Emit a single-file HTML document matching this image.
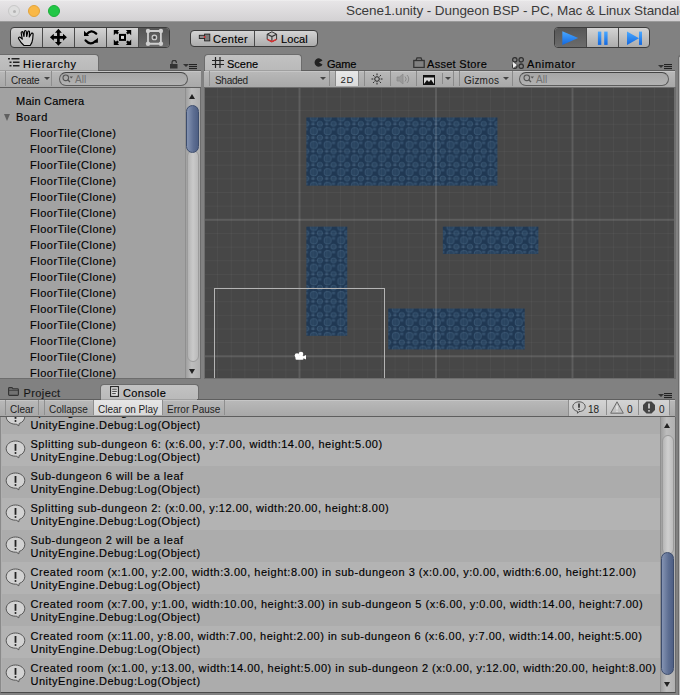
<!DOCTYPE html>
<html><head><meta charset="utf-8">
<style>
*{margin:0;padding:0;box-sizing:border-box}
html,body{width:680px;height:695px;overflow:hidden;background:#818181;font-family:"Liberation Sans",sans-serif;color:#1a1a1a}
.a{position:absolute}
#title{left:0;top:0;width:680px;height:22px;background:linear-gradient(#f4f4f4 0,#e7e5e7 1px,#d3d1d3);border-bottom:1px solid #9a9a9a}
.tl{position:absolute;top:5px;width:12px;height:12px;border-radius:50%}
#ttext{left:346px;top:3px;font-size:13.5px;letter-spacing:-0.08px;color:#3a3a3a;white-space:pre}
.grp{position:absolute;border:1px solid #3c3c3c;border-radius:4px;overflow:hidden;background:linear-gradient(#d4d4d4,#acacac)}
.grp>div{position:absolute;top:0;height:100%;border-right:1px solid #4a4a4a}
.tab{position:absolute;border:1px solid #6c6c6c;border-bottom:none;border-radius:4px 4px 0 0;background:linear-gradient(#c2c2c2,#b9b9b9)}
.tt{position:absolute;font-size:11px;white-space:pre;color:#000;line-height:13px;-webkit-text-stroke:0.15px #000}
.ptb{position:absolute;height:18px;background:linear-gradient(#c6c6c6 0,#c6c6c6 1px,#b8b8b8 1px,#a8a8a8);border-top:1px solid #5e5e5e;border-bottom:1px solid #5e5e5e}
.btxt{position:absolute;font-size:10px;white-space:pre;color:#222;line-height:12px}
.vs{position:absolute;width:1px;background:#8a8a8a}
.srch{position:absolute;height:14px;border:1px solid #5c5c5c;border-top-color:#444;border-radius:7px;background:linear-gradient(#a6a6a6,#b2b2b2)}
.row{position:absolute;left:1px;width:659px;height:32px;background:#b3b3b3}
.row.d{background:#acacac}
.row .l1,.row .l2{position:absolute;left:28.5px;font-size:11px;letter-spacing:0.51px;white-space:pre;color:#000;line-height:13px;-webkit-text-stroke:0.15px #000}
.row .l1{top:4px}
.row .l2{top:17px}
.row svg{position:absolute;left:3px;top:6px}
.hi{position:absolute;left:30px;font-size:11px;letter-spacing:0.5px;white-space:pre;color:#000;line-height:16px;-webkit-text-stroke:0.15px #000}
.dd{position:absolute;width:0;height:0;border-left:3px solid transparent;border-right:3px solid transparent;border-top:3px solid #333}
</style></head><body>

<!-- TITLE BAR -->
<div id="title" class="a">
  <div class="tl" style="left:8px;background:#dedede;border:1px solid #c8c8c8"><div style="position:absolute;left:3.5px;top:3.5px;width:3px;height:3px;border-radius:50%;background:#b4b4b4"></div></div>
  <div class="tl" style="left:28px;background:#f9b847;border:1px solid #e3a33a"></div>
  <div class="tl" style="left:48px;background:#22c746;border:1px solid #1aae38"></div>
  <div id="ttext" class="a">Scene1.unity - Dungeon BSP - PC, Mac &amp; Linux Standalone</div>
</div>

<!-- MAIN TOOLBAR -->
<div class="grp" style="left:10px;top:27px;width:160px;height:21px">
  <div style="left:0;width:32px"></div>
  <div style="left:32px;width:32px"></div>
  <div style="left:64px;width:32px"></div>
  <div style="left:96px;width:32px"></div>
  <div style="left:128px;width:31px;border:none;background:linear-gradient(#555,#6a6a6a)"></div>
</div>
<div class="grp" style="left:190px;top:30px;width:128px;height:17px">
  <div style="left:0;width:64px"></div>
  <div class="tt" style="left:22px;top:1.5px;border:none;letter-spacing:0.33px">Center</div>
  <div class="tt" style="left:90px;top:1.5px;border:none;letter-spacing:0.1px">Local</div>
</div>
<div class="grp" style="left:554px;top:27px;width:96px;height:21px">
  <div style="left:0;width:32px;background:linear-gradient(#575757,#6c6c6c)"></div>
  <div style="left:32px;width:32px"></div>
  <div style="left:64px;width:31px;border:none"></div>
</div>
<svg class="a" style="left:0;top:22px" width="680" height="33" viewBox="0 22 680 33">
<defs><linearGradient id="bl" x1="0" y1="0" x2="0" y2="1"><stop offset="0" stop-color="#4aa8ff"/><stop offset="1" stop-color="#1268e0"/></linearGradient></defs>
<path d="M24 45.5 C21.5 43.5 19.5 40.5 18.6 38.8 C18 37.6 19.2 36.6 20.3 37.3 L22.3 39.2 L21.2 33 C21 31.6 22.6 31.2 23 32.5 L24 36.5 L24.4 31.5 C24.5 30.2 26.2 30.2 26.3 31.5 L26.7 36.5 L27.8 31.8 C28.1 30.6 29.6 30.8 29.5 32.1 L29.3 37 L31.1 33.7 C31.6 32.7 33.2 33.1 33.1 34.2 L32.7 39 C32.4 41.8 31.4 44 30.2 45.5 Z" fill="#cfcfcf" stroke="#000" stroke-width="1.15" stroke-linejoin="round"/>
<path d="M58.40 28.80 L61.85 32.70 L59.75 32.70 L59.75 35.95 L63.00 35.95 L63.00 33.85 L66.90 37.30 L63.00 40.75 L63.00 38.65 L59.75 38.65 L59.75 41.90 L61.85 41.90 L58.40 45.80 L54.95 41.90 L57.05 41.90 L57.05 38.65 L53.80 38.65 L53.80 40.75 L49.90 37.30 L53.80 33.85 L53.80 35.95 L57.05 35.95 L57.05 32.70 L54.95 32.70Z" fill="#000"/>
<path d="M86.6 34.2 Q91.2 28.8 96.2 33.6" fill="none" stroke="#000" stroke-width="2.3" stroke-linecap="round"/>
<path d="M84 30.8 L84 35.9 L89.1 35.9Z" fill="#000"/>
<path d="M85.6 40.4 Q90.6 46 95.6 41" fill="none" stroke="#000" stroke-width="2.3" stroke-linecap="round"/>
<path d="M97.9 37.7 L97.9 42.8 L92.8 42.8Z" fill="#000"/>
<rect x="120" y="34.9" width="5" height="5" fill="#d8d8d8" stroke="#000" stroke-width="2"/>
<path d="M113.8 29.9 L119.2 29.9 L117.6 31.5 L118.9 32.8 L117.2 34.5 L115.9 33.2 L113.8 35.3Z M131.2 29.9 L125.8 29.9 L127.4 31.5 L126.1 32.8 L127.8 34.5 L129.1 33.2 L131.2 35.3Z M113.8 45 L119.2 45 L117.6 43.4 L118.9 42.1 L117.2 40.4 L115.9 41.7 L113.8 39.6Z M131.2 45 L125.8 45 L127.4 43.4 L126.1 42.1 L127.8 40.4 L129.1 41.7 L131.2 39.6Z" fill="#000"/>
<path d="M148 31 H160.9 V43.75 H148Z" fill="none" stroke="#cfcfcf" stroke-width="1.8"/>
<circle cx="148" cy="31" r="2.2" fill="#cfcfcf"/><circle cx="160.9" cy="31" r="2.2" fill="#cfcfcf"/><circle cx="148" cy="43.75" r="2.2" fill="#cfcfcf"/><circle cx="160.9" cy="43.75" r="2.2" fill="#cfcfcf"/>
<circle cx="154.4" cy="37.4" r="2.3" fill="none" stroke="#cfcfcf" stroke-width="1.1"/><circle cx="154.4" cy="37.4" r="0.7" fill="#333"/>
<rect x="199.3" y="35.3" width="5.2" height="3.2" fill="#8a8a8a" stroke="#222" stroke-width="0.9"/>
<rect x="204.6" y="34.1" width="5.2" height="6.8" fill="#7a7a7a" stroke="#222" stroke-width="0.9"/>
<circle cx="204.6" cy="37" r="1" fill="#e03030"/>
<path d="M271.9 31.8 L276.6 34.2 L276.6 39.4 L271.9 41.8 L267.2 39.4 L267.2 34.2Z" fill="#c4c4c4" stroke="#333" stroke-width="1"/>
<path d="M267.2 34.2 L271.9 36.6 L276.6 34.2 M271.9 36.6 L271.9 41.8" fill="none" stroke="#333" stroke-width="1.1"/>
<path d="M267.4 39.4 L271.9 41.7 L276.4 39.4" fill="none" stroke="#d83030" stroke-width="1.5"/>
<path d="M562.3 31.2 L578.2 38 L562.3 44.9Z" fill="url(#bl)"/>
<rect x="597.9" y="31.6" width="3.4" height="13.3" fill="url(#bl)"/><rect x="604.2" y="31.6" width="3.4" height="13.3" fill="url(#bl)"/>
<path d="M627 31.6 L639 38.2 L627 44.9Z" fill="url(#bl)"/><rect x="639" y="31.6" width="3" height="13.3" fill="url(#bl)"/>
</svg>

<!-- HIERARCHY PANEL -->
<div class="tab" style="left:-4px;top:54px;width:103px;height:17px"></div>
<svg class="a" style="left:8px;top:58px" width="12" height="9" viewBox="0 0 12 9"><rect x="0" y="0" width="2" height="1.5" fill="#222"/><rect x="3.5" y="0" width="8" height="1.5" fill="#222"/><rect x="1.5" y="3.5" width="2" height="1.5" fill="#222"/><rect x="5" y="3.5" width="6.5" height="1.5" fill="#222"/><rect x="1.5" y="7" width="2" height="1.5" fill="#222"/><rect x="5" y="7" width="6.5" height="1.5" fill="#222"/></svg>
<div class="tt" style="left:23px;top:58px;letter-spacing:0.75px">Hierarchy</div>
<svg class="a" style="left:170px;top:60px" width="8" height="9" viewBox="0 0 8 9"><path d="M2 4 L2 2.5 A2.2 2.2 0 0 1 6.4 2.5 L6.4 3" fill="none" stroke="#333" stroke-width="1.2"/><rect x="0" y="4" width="7.5" height="4.5" fill="#333"/></svg>
<div class="dd" style="left:183px;top:64px"></div>
<svg class="a" style="left:189px;top:64px" width="9" height="6" viewBox="0 0 9 6"><rect y="0" width="8" height="1.1" fill="#222"/><rect y="2" width="8" height="1.1" fill="#222"/><rect y="4" width="8" height="1.1" fill="#222"/></svg>
<div class="ptb" style="left:0;top:70px;width:201px"></div><div class="a" style="left:0;top:70px;width:98px;height:1px;background:#a0a0a0"></div>
<div class="vs" style="left:5px;top:71px;height:15px;background:#8e8e8e"></div>
<div class="btxt" style="left:11px;top:74.5px;letter-spacing:-0.3px">Create</div>
<div class="dd" style="left:44px;top:77px;border-top-color:#444"></div>
<div class="vs" style="left:51px;top:71px;height:15px;background:#8e8e8e"></div>
<div class="srch" style="left:59px;top:72px;width:129px"></div>
<svg class="a" style="left:62px;top:74px" width="12" height="10" viewBox="0 0 12 10"><circle cx="3.8" cy="3.8" r="2.8" fill="none" stroke="#555" stroke-width="1.1"/><path d="M5.8 5.8 L8 8" stroke="#555" stroke-width="1.3"/><path d="M7.5 2.5 L11 2.5 L9.25 4.5Z" fill="#555"/></svg>
<div class="btxt" style="left:75px;top:74px;color:#707070">All</div>
<div class="a" style="left:0;top:88px;width:201px;height:291px;background:#a2a2a2;border-right:1px solid #6d6d6d;border-bottom:1px solid #6d6d6d"></div>
<div class="hi" style="left:16px;top:93px;letter-spacing:0.22px">Main Camera</div>
<div class="a" style="left:4.3px;top:113.5px;width:0;height:0;border-left:3.9px solid transparent;border-right:3.9px solid transparent;border-top:7px solid #606060"></div>
<div class="hi" style="left:16px;top:109px">Board</div>
<div class="hi" style="top:125px">FloorTile(Clone)</div>
<div class="hi" style="top:141px">FloorTile(Clone)</div>
<div class="hi" style="top:157px">FloorTile(Clone)</div>
<div class="hi" style="top:173px">FloorTile(Clone)</div>
<div class="hi" style="top:189px">FloorTile(Clone)</div>
<div class="hi" style="top:205px">FloorTile(Clone)</div>
<div class="hi" style="top:221px">FloorTile(Clone)</div>
<div class="hi" style="top:237px">FloorTile(Clone)</div>
<div class="hi" style="top:253px">FloorTile(Clone)</div>
<div class="hi" style="top:269px">FloorTile(Clone)</div>
<div class="hi" style="top:285px">FloorTile(Clone)</div>
<div class="hi" style="top:301px">FloorTile(Clone)</div>
<div class="hi" style="top:317px">FloorTile(Clone)</div>
<div class="hi" style="top:333px">FloorTile(Clone)</div>
<div class="hi" style="top:349px">FloorTile(Clone)</div>
<div class="hi" style="top:365px">FloorTile(Clone)</div>
<!-- hierarchy scrollbar -->
<div class="a" style="left:185px;top:88px;width:15px;height:290px;background:linear-gradient(90deg,#a0a0a0,#bdbdbd 40%,#b0b0b0);border-left:1px solid #8f8f8f"></div>
<div class="a" style="left:189px;top:94px;width:0;height:0;border-left:3.5px solid transparent;border-right:3.5px solid transparent;border-bottom:5px solid #222"></div>
<div class="a" style="left:187px;top:150px;width:12px;height:212px;border-radius:6px;background:linear-gradient(90deg,#b4b4b4,#cacaca 50%,#bababa);border:1px solid #9c9c9c"></div>
<div class="a" style="left:186px;top:105px;width:13px;height:48px;border-radius:6.5px;background:linear-gradient(90deg,#8493b2,#5d6e92 60%,#4e5f84);border:1px solid #3d4d6d"></div>
<div class="a" style="left:189px;top:368.5px;width:0;height:0;border-left:3.5px solid transparent;border-right:3.5px solid transparent;border-top:5px solid #222"></div>

<!-- SCENE PANEL -->
<div class="tab" style="left:204px;top:54px;width:98px;height:17px"></div>
<svg class="a" style="left:212px;top:57px" width="12" height="11" viewBox="0 0 12 11"><path d="M3.5 0 V11 M8 0 V11 M0 3.5 H12 M0 7.5 H12" stroke="#222" stroke-width="1.2"/></svg>
<div class="tt" style="left:227px;top:58px">Scene</div>
<svg class="a" style="left:314px;top:58px" width="9" height="9" viewBox="0 0 9 9"><path d="M8.5 2.6 A4.2 4.2 0 1 0 8.5 6.4 L5 4.5 Z" fill="#222"/></svg>
<div class="tt" style="left:327px;top:58px;letter-spacing:-0.2px">Game</div>
<svg class="a" style="left:413px;top:57px" width="12" height="11" viewBox="0 0 12 11"><rect x="0.8" y="3.5" width="10.4" height="7" fill="none" stroke="#333" stroke-width="1.3"/><path d="M3 3.5 L4 0.8 L8 0.8 L9 3.5" fill="none" stroke="#333" stroke-width="1.2"/></svg>
<div class="tt" style="left:427px;top:58px;letter-spacing:0.29px">Asset Store</div>
<svg class="a" style="left:512px;top:57px" width="12" height="12" viewBox="0 0 12 12"><circle cx="2.8" cy="2.8" r="2.2" fill="none" stroke="#333" stroke-width="1.3"/><circle cx="9.2" cy="2.8" r="2.2" fill="none" stroke="#333" stroke-width="1.3"/><circle cx="2.8" cy="9.2" r="2.2" fill="none" stroke="#333" stroke-width="1.3"/><circle cx="9.2" cy="9.2" r="2.2" fill="none" stroke="#333" stroke-width="1.3"/><path d="M1 5 L5 8 L1 11Z" fill="#eee"/></svg>
<div class="tt" style="left:527px;top:58px;letter-spacing:0.6px">Animator</div>
<div class="dd" style="left:658px;top:65px"></div>
<svg class="a" style="left:664px;top:64px" width="9" height="6" viewBox="0 0 9 6"><rect y="0" width="8" height="1.1" fill="#222"/><rect y="2" width="8" height="1.1" fill="#222"/><rect y="4" width="8" height="1.1" fill="#222"/></svg>
<div class="ptb" style="left:204px;top:70px;width:471px"></div><div class="a" style="left:205px;top:70px;width:96px;height:1px;background:#a0a0a0"></div>
<div class="vs" style="left:209px;top:71px;height:15px;background:#8e8e8e"></div>
<div class="btxt" style="left:215px;top:74.5px;letter-spacing:-0.3px">Shaded</div>
<div class="dd" style="left:320px;top:77px;border-top-color:#444"></div>
<div class="vs" style="left:329px;top:71px;height:15px"></div>
<div class="a" style="left:335px;top:71px;width:23px;height:15px;background:linear-gradient(#e8e8e8,#dadada)"></div>
<div class="vs" style="left:335px;top:71px;height:15px"></div>
<div class="vs" style="left:358px;top:71px;height:15px"></div>
<div class="btxt" style="left:340.5px;top:73.5px;font-size:9.5px;letter-spacing:0.6px">2D</div>
<div class="vs" style="left:364px;top:71px;height:15px"></div>
<svg class="a" style="left:371px;top:73px" width="12" height="12" viewBox="0 0 12 12"><circle cx="6" cy="6" r="2.3" fill="none" stroke="#222" stroke-width="1"/><path d="M6 0.5V2.3M6 9.7V11.5M0.5 6H2.3M9.7 6H11.5M2.1 2.1L3.4 3.4M8.6 8.6L9.9 9.9M2.1 9.9L3.4 8.6M8.6 3.4L9.9 2.1" stroke="#222" stroke-width="1"/></svg>
<div class="vs" style="left:390px;top:71px;height:15px"></div>
<svg class="a" style="left:396px;top:73px" width="14" height="12" viewBox="0 0 14 12"><path d="M1 4 L3.5 4 L7 1 L7 11 L3.5 8 L1 8Z" fill="#9a9a9a" stroke="#8a8a8a" stroke-width="0.8"/><path d="M9 3.5 A3.5 3.5 0 0 1 9 8.5 M11 2 A5.5 5.5 0 0 1 11 10" fill="none" stroke="#8a8a8a" stroke-width="1"/></svg>
<div class="vs" style="left:416px;top:71px;height:15px"></div>
<svg class="a" style="left:423px;top:75px" width="12" height="10" viewBox="0 0 12 10"><rect x="0.5" y="0.5" width="11" height="9" fill="#d8d8d8" stroke="#111" stroke-width="1"/><path d="M1 9 L4 5 L6 7 L8 4.5 L11 9Z" fill="#111"/><rect x="0.5" y="0.5" width="11" height="2" fill="#111"/></svg>
<div class="vs" style="left:442px;top:73px;height:11px"></div>
<div class="dd" style="left:445px;top:77px;border-top-color:#444"></div>
<div class="vs" style="left:453px;top:71px;height:15px"></div>
<div class="vs" style="left:459px;top:71px;height:15px"></div>
<div class="btxt" style="left:464px;top:75px;letter-spacing:0.2px">Gizmos</div>
<div class="dd" style="left:503px;top:77px;border-top-color:#444"></div>
<div class="vs" style="left:512px;top:71px;height:15px"></div>
<div class="srch" style="left:519px;top:72px;width:150px"></div>
<svg class="a" style="left:523px;top:74px" width="12" height="10" viewBox="0 0 12 10"><circle cx="3.8" cy="3.8" r="2.8" fill="none" stroke="#555" stroke-width="1.1"/><path d="M5.8 5.8 L8 8" stroke="#555" stroke-width="1.3"/><path d="M7.5 2.5 L11 2.5 L9.25 4.5Z" fill="#555"/></svg>
<div class="btxt" style="left:536px;top:74px;color:#707070">All</div>
<div class="a" style="left:204px;top:87px;width:472px;height:292px;background:#6d6d6d"></div>
<svg class="a" style="left:205px;top:88px" width="469" height="290" viewBox="0 0 469 290">
<defs>
<pattern id="tp" patternUnits="userSpaceOnUse" x="101.32" y="261.48" width="13.65" height="13.65">
<rect width="13.65" height="13.65" fill="#203853"/>
<g fill="#34506d">
<rect x="5.2" y="5.2" width="3" height="2.6"/>
<rect x="12" y="10.5" width="1.6" height="2.6"/>
<rect x="0" y="10.5" width="1.4" height="2.6"/>
</g>
<g fill="#294460" stroke="#3a5773" stroke-width="0.9">
<rect x="4.2" y="-3.3" width="6.8" height="6.9" rx="2.4"/>
<rect x="4.2" y="10.35" width="6.8" height="6.9" rx="2.4"/>
<rect x="-2.6" y="4.2" width="5" height="4.6" rx="1.8"/>
<rect x="11.05" y="4.2" width="5" height="4.6" rx="1.8"/>
</g>
</pattern>
</defs>
<rect width="469" height="290" fill="#474747"/>
<rect x="101.32" y="138.62" width="40.95" height="109.20" fill="url(#tp)"/>
<rect x="183.23" y="220.53" width="136.50" height="40.95" fill="url(#tp)"/>
<rect x="237.83" y="138.62" width="95.55" height="27.30" fill="url(#tp)"/>
<rect x="101.32" y="29.43" width="191.10" height="68.25" fill="url(#tp)"/>
<rect x="12.10" y="0" width="1" height="290" fill="#fff" fill-opacity="0.04"/>
<rect x="25.75" y="0" width="1" height="290" fill="#fff" fill-opacity="0.04"/>
<rect x="39.40" y="0" width="1" height="290" fill="#fff" fill-opacity="0.04"/>
<rect x="53.05" y="0" width="1" height="290" fill="#fff" fill-opacity="0.04"/>
<rect x="66.70" y="0" width="1" height="290" fill="#fff" fill-opacity="0.04"/>
<rect x="80.35" y="0" width="1" height="290" fill="#fff" fill-opacity="0.04"/>
<rect x="107.65" y="0" width="1" height="290" fill="#fff" fill-opacity="0.04"/>
<rect x="121.30" y="0" width="1" height="290" fill="#fff" fill-opacity="0.04"/>
<rect x="134.95" y="0" width="1" height="290" fill="#fff" fill-opacity="0.04"/>
<rect x="148.60" y="0" width="1" height="290" fill="#fff" fill-opacity="0.04"/>
<rect x="162.25" y="0" width="1" height="290" fill="#fff" fill-opacity="0.04"/>
<rect x="175.90" y="0" width="1" height="290" fill="#fff" fill-opacity="0.04"/>
<rect x="189.55" y="0" width="1" height="290" fill="#fff" fill-opacity="0.04"/>
<rect x="203.20" y="0" width="1" height="290" fill="#fff" fill-opacity="0.04"/>
<rect x="216.85" y="0" width="1" height="290" fill="#fff" fill-opacity="0.04"/>
<rect x="244.15" y="0" width="1" height="290" fill="#fff" fill-opacity="0.04"/>
<rect x="257.80" y="0" width="1" height="290" fill="#fff" fill-opacity="0.04"/>
<rect x="271.45" y="0" width="1" height="290" fill="#fff" fill-opacity="0.04"/>
<rect x="285.10" y="0" width="1" height="290" fill="#fff" fill-opacity="0.04"/>
<rect x="298.75" y="0" width="1" height="290" fill="#fff" fill-opacity="0.04"/>
<rect x="312.40" y="0" width="1" height="290" fill="#fff" fill-opacity="0.04"/>
<rect x="326.05" y="0" width="1" height="290" fill="#fff" fill-opacity="0.04"/>
<rect x="339.70" y="0" width="1" height="290" fill="#fff" fill-opacity="0.04"/>
<rect x="353.35" y="0" width="1" height="290" fill="#fff" fill-opacity="0.04"/>
<rect x="380.65" y="0" width="1" height="290" fill="#fff" fill-opacity="0.04"/>
<rect x="394.30" y="0" width="1" height="290" fill="#fff" fill-opacity="0.04"/>
<rect x="407.95" y="0" width="1" height="290" fill="#fff" fill-opacity="0.04"/>
<rect x="421.60" y="0" width="1" height="290" fill="#fff" fill-opacity="0.04"/>
<rect x="435.25" y="0" width="1" height="290" fill="#fff" fill-opacity="0.04"/>
<rect x="448.90" y="0" width="1" height="290" fill="#fff" fill-opacity="0.04"/>
<rect x="462.55" y="0" width="1" height="290" fill="#fff" fill-opacity="0.04"/>
<rect x="0" y="281.45" width="469" height="1" fill="#fff" fill-opacity="0.04"/>
<rect x="0" y="254.15" width="469" height="1" fill="#fff" fill-opacity="0.04"/>
<rect x="0" y="240.50" width="469" height="1" fill="#fff" fill-opacity="0.04"/>
<rect x="0" y="226.85" width="469" height="1" fill="#fff" fill-opacity="0.04"/>
<rect x="0" y="213.20" width="469" height="1" fill="#fff" fill-opacity="0.04"/>
<rect x="0" y="199.55" width="469" height="1" fill="#fff" fill-opacity="0.04"/>
<rect x="0" y="185.90" width="469" height="1" fill="#fff" fill-opacity="0.04"/>
<rect x="0" y="172.25" width="469" height="1" fill="#fff" fill-opacity="0.04"/>
<rect x="0" y="158.60" width="469" height="1" fill="#fff" fill-opacity="0.04"/>
<rect x="0" y="144.95" width="469" height="1" fill="#fff" fill-opacity="0.04"/>
<rect x="0" y="117.65" width="469" height="1" fill="#fff" fill-opacity="0.04"/>
<rect x="0" y="104.00" width="469" height="1" fill="#fff" fill-opacity="0.04"/>
<rect x="0" y="90.35" width="469" height="1" fill="#fff" fill-opacity="0.04"/>
<rect x="0" y="76.70" width="469" height="1" fill="#fff" fill-opacity="0.04"/>
<rect x="0" y="63.05" width="469" height="1" fill="#fff" fill-opacity="0.04"/>
<rect x="0" y="49.40" width="469" height="1" fill="#fff" fill-opacity="0.04"/>
<rect x="0" y="35.75" width="469" height="1" fill="#fff" fill-opacity="0.04"/>
<rect x="0" y="22.10" width="469" height="1" fill="#fff" fill-opacity="0.04"/>
<rect x="0" y="8.45" width="469" height="1" fill="#fff" fill-opacity="0.04"/>
<rect x="93.50" y="0" width="2" height="290" fill="#fff" fill-opacity="0.12"/>
<rect x="0" y="267.30" width="469" height="2" fill="#fff" fill-opacity="0.12"/>
<rect x="230.00" y="0" width="2" height="290" fill="#fff" fill-opacity="0.12"/>
<rect x="0" y="130.80" width="469" height="2" fill="#fff" fill-opacity="0.12"/>
<rect x="366.50" y="0" width="2" height="290" fill="#fff" fill-opacity="0.12"/>
<rect x="9.5" y="200.5" width="170.0" height="200" fill="none" stroke="#b4b4b4" stroke-width="1"/>
<g transform="translate(95,268.5)" fill="#fff">
<circle cx="1" cy="-2.5" r="2.3"/><circle cx="-3" cy="-1" r="2.3"/><rect x="-4.5" y="-1" width="8" height="4.2" rx="1"/><path d="M3 0 L6 -1.5 L6 3 L3 1.5Z"/>
</g>
</svg>

<!-- CONSOLE PANEL -->
<svg class="a" style="left:8px;top:387px" width="11" height="9" viewBox="0 0 11 9"><path d="M0.6 1.5 Q0.6 0.6 1.5 0.6 L4 0.6 L5 1.8 L9.5 1.8 Q10.4 1.8 10.4 2.7 L10.4 7.6 Q10.4 8.4 9.5 8.4 L1.5 8.4 Q0.6 8.4 0.6 7.6Z" fill="#727272" stroke="#333" stroke-width="1.1"/><path d="M0.8 3.3 H10.2" stroke="#333" stroke-width="0.8"/></svg>
<div class="tt" style="left:23.5px;top:387px;letter-spacing:0.4px;color:#222">Project</div>
<div class="tab" style="left:100px;top:383.5px;width:98.5px;height:16.5px"></div>
<svg class="a" style="left:110px;top:386px" width="9" height="11" viewBox="0 0 9 11"><rect x="0.6" y="0.6" width="7.8" height="9.8" fill="#e0e0e0" stroke="#222" stroke-width="1.1"/><path d="M2.2 3.2H6.8M2.2 5.4H6.8M2.2 7.6H5.8" stroke="#444" stroke-width="1"/></svg>
<div class="tt" style="left:123px;top:387px;letter-spacing:0.4px">Console</div>
<div class="dd" style="left:658px;top:394px"></div>
<svg class="a" style="left:664px;top:393px" width="9" height="6" viewBox="0 0 9 6"><rect y="0" width="8" height="1.1" fill="#222"/><rect y="2" width="8" height="1.1" fill="#222"/><rect y="4" width="8" height="1.1" fill="#222"/></svg>
<div class="ptb" style="left:0;top:399px;width:675px"></div><div class="a" style="left:101px;top:399px;width:96px;height:1px;background:#a0a0a0"></div>
<div class="vs" style="left:5px;top:400px;height:15px;background:#8e8e8e"></div>
<div class="btxt" style="left:10px;top:404px">Clear</div>
<div class="vs" style="left:38px;top:400px;height:15px;background:#8e8e8e"></div>
<div class="vs" style="left:44px;top:400px;height:15px;background:#8e8e8e"></div>
<div class="btxt" style="left:49px;top:404px">Collapse</div>
<div class="a" style="left:93px;top:400px;width:69px;height:15px;background:linear-gradient(#e6e6e6,#d8d8d8)"></div>
<div class="vs" style="left:93px;top:400px;height:15px;background:#8e8e8e"></div>
<div class="btxt" style="left:98px;top:404px">Clear on Play</div>
<div class="vs" style="left:162px;top:400px;height:15px;background:#8e8e8e"></div>
<div class="btxt" style="left:167px;top:404px">Error Pause</div>
<div class="vs" style="left:224px;top:400px;height:15px;background:#8e8e8e"></div>
<div class="a" style="left:568px;top:400px;width:101px;height:16px;background:linear-gradient(#d4d4d4,#c2c2c2)"></div><div class="vs" style="left:568px;top:400px;height:16px;background:#8e8e8e"></div>
<svg class="a" style="left:572px;top:401px" width="14" height="13" viewBox="0 0 14 13"><path d="M7 0.8 C10.5 0.8 13.2 3 13.2 5.7 C13.2 8.4 10.5 10.6 7 10.6 L5.5 12.3 L5.6 10.4 C2.8 9.8 0.8 7.9 0.8 5.7 C0.8 3 3.5 0.8 7 0.8Z" fill="#ccc" stroke="#444" stroke-width="0.9"/><path d="M7 2.5 L7 6.8" stroke="#222" stroke-width="1.5"/><circle cx="7" cy="8.5" r="0.8" fill="#222"/></svg>
<div class="btxt" style="left:588px;top:404px">18</div>
<div class="vs" style="left:606px;top:400px;height:15px;background:#8e8e8e"></div>
<svg class="a" style="left:610px;top:401px" width="14" height="13" viewBox="0 0 14 13"><path d="M7 0.8 L13.3 12.2 L0.7 12.2Z" fill="#c2c2c2" stroke="#6a6a6a" stroke-width="1"/><path d="M7 4.5 L7 8.5" stroke="#eee" stroke-width="1.3"/><circle cx="7" cy="10.2" r="0.7" fill="#eee"/></svg>
<div class="btxt" style="left:627px;top:404px">0</div>
<div class="vs" style="left:638px;top:400px;height:15px;background:#8e8e8e"></div>
<svg class="a" style="left:642px;top:401px" width="14" height="13" viewBox="0 0 14 13"><path d="M4.5 0.5 L9.5 0.5 L13 4 L13 9 L9.5 12.5 L4.5 12.5 L1 9 L1 4Z" fill="#444"/><path d="M7 2.5 L7 7.5" stroke="#ddd" stroke-width="1.6"/><circle cx="7" cy="9.8" r="0.9" fill="#ddd"/></svg>
<div class="btxt" style="left:659px;top:404px">0</div>
<div class="vs" style="left:669px;top:400px;height:15px;background:#8e8e8e"></div>
<div class="a" style="left:0;top:417px;width:676px;height:276px;background:#b0b0b0;border-left:1px solid #8a8a8a;border-right:1px solid #6d6d6d;border-bottom:1px solid #4a4a4a;overflow:hidden">
<div class="row d" style="top:-15px"><svg width="21" height="19" viewBox="0 0 21 19"><path d="M10.5 1 C15.7 1 19.8 4.4 19.8 8.6 C19.8 11.8 17.5 14.4 14.2 15.5 L13.8 17.8 L11.2 16.1 C11 16.1 10.7 16.2 10.5 16.2 C5.3 16.2 1.2 12.8 1.2 8.6 C1.2 4.4 5.3 1 10.5 1Z" fill="#d2d2d2" stroke="#555" stroke-width="1"/><path d="M10.5 4 L10.5 10.8" stroke="#222" stroke-width="1.8"/><circle cx="10.5" cy="13" r="1" fill="#222"/></svg><div class="l1">Splitting sub-dungeon 4: ...</div><div class="l2">UnityEngine.Debug:Log(Object)</div></div>
<div class="row" style="top:17px"><svg width="21" height="19" viewBox="0 0 21 19"><path d="M10.5 1 C15.7 1 19.8 4.4 19.8 8.6 C19.8 11.8 17.5 14.4 14.2 15.5 L13.8 17.8 L11.2 16.1 C11 16.1 10.7 16.2 10.5 16.2 C5.3 16.2 1.2 12.8 1.2 8.6 C1.2 4.4 5.3 1 10.5 1Z" fill="#d2d2d2" stroke="#555" stroke-width="1"/><path d="M10.5 4 L10.5 10.8" stroke="#222" stroke-width="1.8"/><circle cx="10.5" cy="13" r="1" fill="#222"/></svg><div class="l1">Splitting sub-dungeon 6: (x:6.00, y:7.00, width:14.00, height:5.00)</div><div class="l2">UnityEngine.Debug:Log(Object)</div></div>
<div class="row d" style="top:49px"><svg width="21" height="19" viewBox="0 0 21 19"><path d="M10.5 1 C15.7 1 19.8 4.4 19.8 8.6 C19.8 11.8 17.5 14.4 14.2 15.5 L13.8 17.8 L11.2 16.1 C11 16.1 10.7 16.2 10.5 16.2 C5.3 16.2 1.2 12.8 1.2 8.6 C1.2 4.4 5.3 1 10.5 1Z" fill="#d2d2d2" stroke="#555" stroke-width="1"/><path d="M10.5 4 L10.5 10.8" stroke="#222" stroke-width="1.8"/><circle cx="10.5" cy="13" r="1" fill="#222"/></svg><div class="l1">Sub-dungeon 6 will be a leaf</div><div class="l2">UnityEngine.Debug:Log(Object)</div></div>
<div class="row" style="top:81px"><svg width="21" height="19" viewBox="0 0 21 19"><path d="M10.5 1 C15.7 1 19.8 4.4 19.8 8.6 C19.8 11.8 17.5 14.4 14.2 15.5 L13.8 17.8 L11.2 16.1 C11 16.1 10.7 16.2 10.5 16.2 C5.3 16.2 1.2 12.8 1.2 8.6 C1.2 4.4 5.3 1 10.5 1Z" fill="#d2d2d2" stroke="#555" stroke-width="1"/><path d="M10.5 4 L10.5 10.8" stroke="#222" stroke-width="1.8"/><circle cx="10.5" cy="13" r="1" fill="#222"/></svg><div class="l1">Splitting sub-dungeon 2: (x:0.00, y:12.00, width:20.00, height:8.00)</div><div class="l2">UnityEngine.Debug:Log(Object)</div></div>
<div class="row d" style="top:113px"><svg width="21" height="19" viewBox="0 0 21 19"><path d="M10.5 1 C15.7 1 19.8 4.4 19.8 8.6 C19.8 11.8 17.5 14.4 14.2 15.5 L13.8 17.8 L11.2 16.1 C11 16.1 10.7 16.2 10.5 16.2 C5.3 16.2 1.2 12.8 1.2 8.6 C1.2 4.4 5.3 1 10.5 1Z" fill="#d2d2d2" stroke="#555" stroke-width="1"/><path d="M10.5 4 L10.5 10.8" stroke="#222" stroke-width="1.8"/><circle cx="10.5" cy="13" r="1" fill="#222"/></svg><div class="l1">Sub-dungeon 2 will be a leaf</div><div class="l2">UnityEngine.Debug:Log(Object)</div></div>
<div class="row" style="top:145px"><svg width="21" height="19" viewBox="0 0 21 19"><path d="M10.5 1 C15.7 1 19.8 4.4 19.8 8.6 C19.8 11.8 17.5 14.4 14.2 15.5 L13.8 17.8 L11.2 16.1 C11 16.1 10.7 16.2 10.5 16.2 C5.3 16.2 1.2 12.8 1.2 8.6 C1.2 4.4 5.3 1 10.5 1Z" fill="#d2d2d2" stroke="#555" stroke-width="1"/><path d="M10.5 4 L10.5 10.8" stroke="#222" stroke-width="1.8"/><circle cx="10.5" cy="13" r="1" fill="#222"/></svg><div class="l1">Created room (x:1.00, y:2.00, width:3.00, height:8.00) in sub-dungeon 3 (x:0.00, y:0.00, width:6.00, height:12.00)</div><div class="l2">UnityEngine.Debug:Log(Object)</div></div>
<div class="row d" style="top:177px"><svg width="21" height="19" viewBox="0 0 21 19"><path d="M10.5 1 C15.7 1 19.8 4.4 19.8 8.6 C19.8 11.8 17.5 14.4 14.2 15.5 L13.8 17.8 L11.2 16.1 C11 16.1 10.7 16.2 10.5 16.2 C5.3 16.2 1.2 12.8 1.2 8.6 C1.2 4.4 5.3 1 10.5 1Z" fill="#d2d2d2" stroke="#555" stroke-width="1"/><path d="M10.5 4 L10.5 10.8" stroke="#222" stroke-width="1.8"/><circle cx="10.5" cy="13" r="1" fill="#222"/></svg><div class="l1">Created room (x:7.00, y:1.00, width:10.00, height:3.00) in sub-dungeon 5 (x:6.00, y:0.00, width:14.00, height:7.00)</div><div class="l2">UnityEngine.Debug:Log(Object)</div></div>
<div class="row" style="top:209px"><svg width="21" height="19" viewBox="0 0 21 19"><path d="M10.5 1 C15.7 1 19.8 4.4 19.8 8.6 C19.8 11.8 17.5 14.4 14.2 15.5 L13.8 17.8 L11.2 16.1 C11 16.1 10.7 16.2 10.5 16.2 C5.3 16.2 1.2 12.8 1.2 8.6 C1.2 4.4 5.3 1 10.5 1Z" fill="#d2d2d2" stroke="#555" stroke-width="1"/><path d="M10.5 4 L10.5 10.8" stroke="#222" stroke-width="1.8"/><circle cx="10.5" cy="13" r="1" fill="#222"/></svg><div class="l1">Created room (x:11.00, y:8.00, width:7.00, height:2.00) in sub-dungeon 6 (x:6.00, y:7.00, width:14.00, height:5.00)</div><div class="l2">UnityEngine.Debug:Log(Object)</div></div>
<div class="row d" style="top:241px"><svg width="21" height="19" viewBox="0 0 21 19"><path d="M10.5 1 C15.7 1 19.8 4.4 19.8 8.6 C19.8 11.8 17.5 14.4 14.2 15.5 L13.8 17.8 L11.2 16.1 C11 16.1 10.7 16.2 10.5 16.2 C5.3 16.2 1.2 12.8 1.2 8.6 C1.2 4.4 5.3 1 10.5 1Z" fill="#d2d2d2" stroke="#555" stroke-width="1"/><path d="M10.5 4 L10.5 10.8" stroke="#222" stroke-width="1.8"/><circle cx="10.5" cy="13" r="1" fill="#222"/></svg><div class="l1">Created room (x:1.00, y:13.00, width:14.00, height:5.00) in sub-dungeon 2 (x:0.00, y:12.00, width:20.00, height:8.00)</div><div class="l2">UnityEngine.Debug:Log(Object)</div></div>
<div class="row d" style="top:273px"></div>
</div>
<!-- console scrollbar -->
<div class="a" style="left:660px;top:417px;width:15px;height:275px;background:linear-gradient(90deg,#a0a0a0,#bdbdbd 40%,#b0b0b0);border-left:1px solid #8f8f8f"></div>
<div class="a" style="left:664px;top:423px;width:0;height:0;border-left:3.5px solid transparent;border-right:3.5px solid transparent;border-bottom:5px solid #222"></div>
<div class="a" style="left:662px;top:434.5px;width:12px;height:120px;border-radius:6px;background:linear-gradient(90deg,#b6b6b6,#cfcfcf 50%,#bcbcbc);border:1px solid #9a9a9a"></div>
<div class="a" style="left:661px;top:551.5px;width:13px;height:123px;border-radius:6.5px;background:linear-gradient(90deg,#8493b2,#5d6e92 60%,#4e5f84);border:1px solid #3d4d6d"></div>
<div class="a" style="left:664px;top:682px;width:0;height:0;border-left:3.5px solid transparent;border-right:3.5px solid transparent;border-top:5px solid #222"></div>
<div class="a" style="left:678px;top:55px;width:3px;height:640px;background:#bcbcbc;border-left:1px solid #6c6c6c;border-top:1px solid #6c6c6c;border-radius:3px 0 0 0"></div>
</body></html>
